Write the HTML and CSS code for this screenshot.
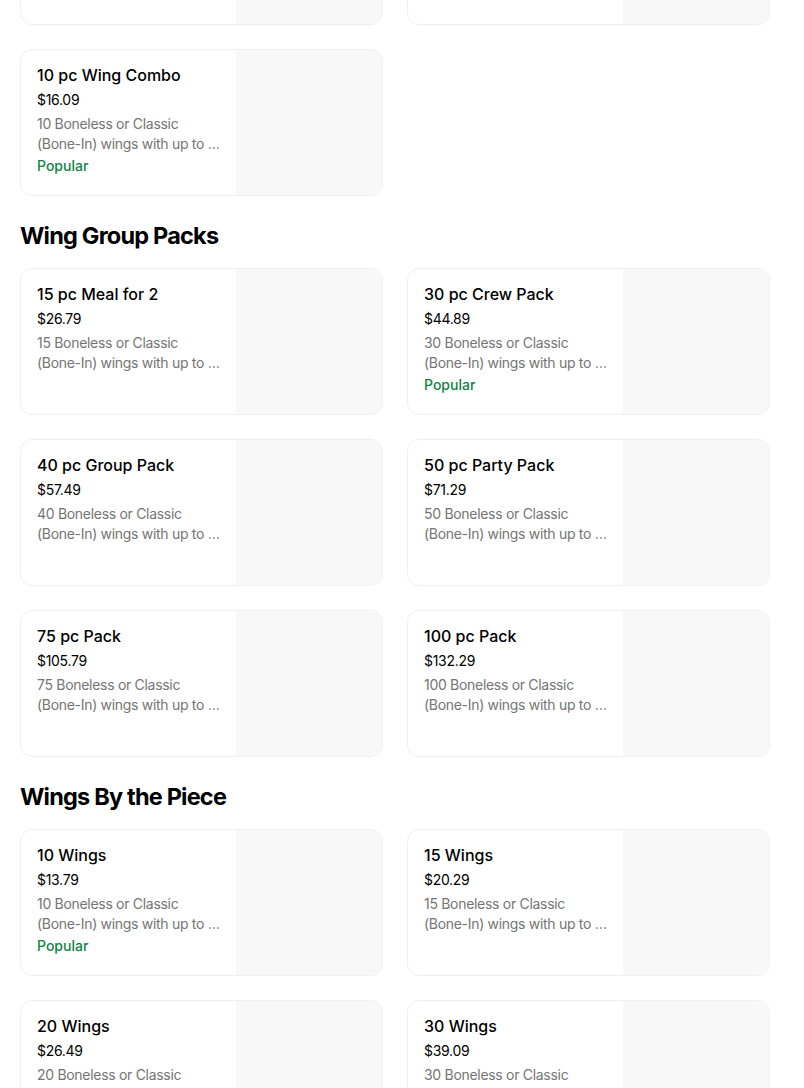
FILE: index.html
```html
<!DOCTYPE html>
<html>
<head>
<meta charset="utf-8">
<link rel="stylesheet" href="styles.css">
</head>
<body>
<main class="menu">
  <section class="section section-first">
    <div class="grid">
      <div class="card"><div class="info"></div><div class="thumb"></div></div>
      <div class="card"><div class="info"></div><div class="thumb"></div></div>
      <div class="card">
        <div class="info">
          <div class="title">10 pc Wing Combo</div>
          <div class="price">$16.09</div>
          <div class="desc"><span class="line">10 Boneless or Classic</span><span class="line">(Bone-In) wings with up to …</span></div>
          <div class="tag">Popular</div>
        </div>
        <div class="thumb"></div>
      </div>
    </div>
  </section>

  <section class="section">
    <h2 class="heading">Wing Group Packs</h2>
    <div class="grid">
      <div class="card">
        <div class="info">
          <div class="title">15 pc Meal for 2</div>
          <div class="price">$26.79</div>
          <div class="desc"><span class="line">15 Boneless or Classic</span><span class="line">(Bone-In) wings with up to …</span></div>
        </div>
        <div class="thumb"></div>
      </div>
      <div class="card">
        <div class="info">
          <div class="title">30 pc Crew Pack</div>
          <div class="price">$44.89</div>
          <div class="desc"><span class="line">30 Boneless or Classic</span><span class="line">(Bone-In) wings with up to …</span></div>
          <div class="tag">Popular</div>
        </div>
        <div class="thumb"></div>
      </div>
      <div class="card">
        <div class="info">
          <div class="title">40 pc Group Pack</div>
          <div class="price">$57.49</div>
          <div class="desc"><span class="line">40 Boneless or Classic</span><span class="line">(Bone-In) wings with up to …</span></div>
        </div>
        <div class="thumb"></div>
      </div>
      <div class="card">
        <div class="info">
          <div class="title">50 pc Party Pack</div>
          <div class="price">$71.29</div>
          <div class="desc"><span class="line">50 Boneless or Classic</span><span class="line">(Bone-In) wings with up to …</span></div>
        </div>
        <div class="thumb"></div>
      </div>
      <div class="card">
        <div class="info">
          <div class="title">75 pc Pack</div>
          <div class="price">$105.79</div>
          <div class="desc"><span class="line">75 Boneless or Classic</span><span class="line">(Bone-In) wings with up to …</span></div>
        </div>
        <div class="thumb"></div>
      </div>
      <div class="card">
        <div class="info">
          <div class="title">100 pc Pack</div>
          <div class="price">$132.29</div>
          <div class="desc"><span class="line">100 Boneless or Classic</span><span class="line">(Bone-In) wings with up to …</span></div>
        </div>
        <div class="thumb"></div>
      </div>
    </div>
  </section>

  <section class="section">
    <h2 class="heading">Wings By the Piece</h2>
    <div class="grid">
      <div class="card">
        <div class="info">
          <div class="title">10 Wings</div>
          <div class="price">$13.79</div>
          <div class="desc"><span class="line">10 Boneless or Classic</span><span class="line">(Bone-In) wings with up to …</span></div>
          <div class="tag">Popular</div>
        </div>
        <div class="thumb"></div>
      </div>
      <div class="card">
        <div class="info">
          <div class="title">15 Wings</div>
          <div class="price">$20.29</div>
          <div class="desc"><span class="line">15 Boneless or Classic</span><span class="line">(Bone-In) wings with up to …</span></div>
        </div>
        <div class="thumb"></div>
      </div>
      <div class="card">
        <div class="info">
          <div class="title">20 Wings</div>
          <div class="price">$26.49</div>
          <div class="desc"><span class="line">20 Boneless or Classic</span></div>
        </div>
        <div class="thumb"></div>
      </div>
      <div class="card">
        <div class="info">
          <div class="title">30 Wings</div>
          <div class="price">$39.09</div>
          <div class="desc"><span class="line">30 Boneless or Classic</span></div>
        </div>
        <div class="thumb"></div>
      </div>
    </div>
  </section>
</main>
</body>
</html>
```

FILE: styles.css
```css
* { box-sizing: border-box; }
html, body { margin: 0; padding: 0; background: #ffffff; }
body {
  font-family: "Inter", "Roboto", "Liberation Sans", sans-serif;
  color: #000000;
  overflow: hidden;
  height: 1088px;
}
.menu {
  width: 750px;
  margin-left: 20px;
}
.section-first {
  margin-top: -122px;
}
.heading {
  margin: 24px 0 16px;
  font-size: 23.5px;
  line-height: 32px;
  font-weight: 700;
  letter-spacing: -0.8px;
  color: #000;
}
.grid {
  display: grid;
  grid-template-columns: 1fr 1fr;
  gap: 24px;
}
.card {
  display: flex;
  height: 147px;
  border: 1px solid #f0f0f0;
  border-radius: 12px;
  overflow: hidden;
  background: #fff;
}
.info {
  flex: 1;
  min-width: 0;
  padding: 15px 16px 0 16px;
  display: flex;
  flex-direction: column;
}
.thumb {
  width: 146px;
  flex: none;
  background: #f8f8f8;
}
.title {
  font-size: 16px;
  line-height: 20px;
  font-weight: 500;
  color: #000;
  margin-bottom: 5px;
}
.price {
  font-size: 14px;
  line-height: 20px;
  color: #000;
  margin-bottom: 4px;
  letter-spacing: -0.3px;
}
.desc {
  font-size: 14px;
  line-height: 20px;
  color: #757575;
  letter-spacing: -0.3px;
}
.line {
  display: block;
  white-space: nowrap;
}
.tag {
  margin-top: 2px;
  font-size: 14px;
  line-height: 20px;
  font-weight: 500;
  color: #0e8345;
}
```
